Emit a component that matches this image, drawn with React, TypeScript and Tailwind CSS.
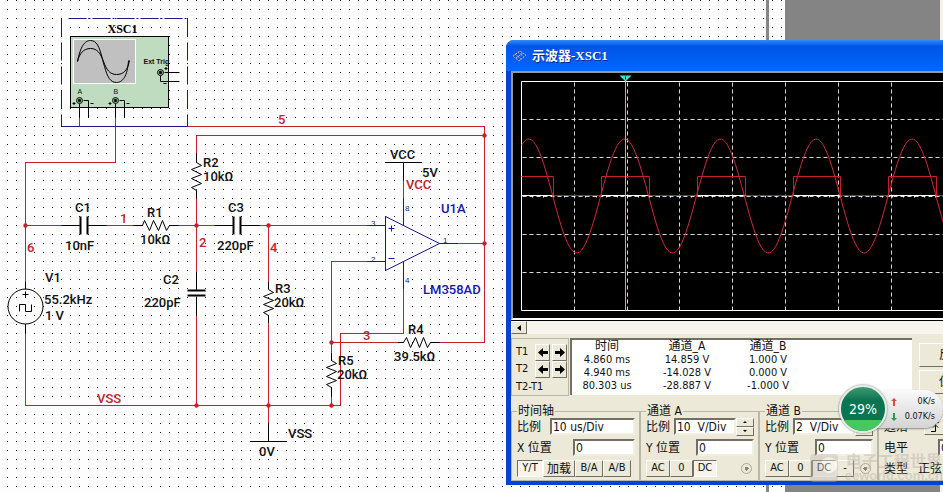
import React from 'react';

const RED = '#c4212d';
const NAVY = '#1a1a8c';

// x, y pairs joined by straight wires
const redWires = [
  '79,117 79,126 484,126 484,342 439,342',
  '115,117 115,162 25,162 25,281',
  '196,153 196,135 484,135',
  '25,225 61,225',
  '106,225 133,225',
  '178,225 214,225',
  '259,225 367,225',
  '196,198 196,271',
  '196,315 196,405',
  '268,225 268,281',
  '268,323 268,423',
  '25,333 25,405 340,405 340,333 403,333 403,288',
  '367,261 331,261 331,352',
  '331,342 397,342',
  '331,396 331,405',
  '458,243 484,243',
  '403,180 403,198',
];

const blackLines = [
  '61,225 80,225',
  '88,225 106,225',
  '133,225 142,225 144,220 149,230 153,220 158,230 162,220 166,230 169,225 178,225',
  '214,225 233,225',
  '241,225 259,225',
  '196,153 196,162 201,165 191,169 201,174 191,178 201,183 191,187 196,190 196,198',
  '196,271 196,290',
  '196,296 196,315',
  '268,281 268,289 273,292 263,296 273,300 263,304 273,308 263,312 268,315 268,323',
  '331,352 331,360 336,363 326,367 336,371 326,376 336,380 326,384 331,387 331,396',
  '397,342 403,342 406,337 410,347 415,337 419,347 423,337 427,347 430,342 439,342',
  '268,423 268,441',
  '250,441 286,441',
  '385,162 421,162',
  '403,162 403,180',
  '25,281 25,289',
  '25,324 25,333',
  '22,294 28,294',
  '25,291 25,297',
  '19,311 19,304 25,304 25,311 31,311 31,304',
];

const blueLines = [
  '367,225 385,225',
  '367,261 385,261',
  '385,216 385,270 439,243 385,216',
  '439,243 458,243',
  '403,198 403,225',
  '403,261 403,288',
  '388,228 394,228',
  '391,225 391,231',
  '388,258 394,258',
];

const nodes = [
  [25, 225],
  [196, 225],
  [268, 225],
  [484, 135],
  [484, 243],
  [331, 342],
  [331, 405],
  [268, 405],
  [196, 405],
];

interface Label {
  x: number;
  y: number;
  text: string;
  fill?: string;
}

const labels: Label[] = [
  { x: 75, y: 212, text: 'C1' },
  { x: 65, y: 250, text: '10nF' },
  { x: 147, y: 217, text: 'R1' },
  { x: 140, y: 244, text: '10kΩ' },
  { x: 203, y: 167, text: 'R2' },
  { x: 203, y: 181, text: '10kΩ' },
  { x: 228, y: 212, text: 'C3' },
  { x: 217, y: 250, text: '220pF' },
  { x: 163, y: 284, text: 'C2' },
  { x: 144, y: 307, text: '220pF' },
  { x: 45, y: 282, text: 'V1' },
  { x: 44, y: 304, text: '55.2kHz' },
  { x: 45, y: 320, text: '1 V' },
  { x: 275, y: 293, text: 'R3' },
  { x: 274, y: 307, text: '20kΩ' },
  { x: 338, y: 365, text: 'R5' },
  { x: 337, y: 379, text: '20kΩ' },
  { x: 408, y: 334, text: 'R4' },
  { x: 394, y: 361, text: '39.5kΩ' },
  { x: 390, y: 159, text: 'VCC' },
  { x: 422, y: 177, text: '5V' },
  { x: 288, y: 438, text: 'VSS' },
  { x: 259, y: 456, text: '0V' },
  { x: 406, y: 189, text: 'VCC', fill: RED },
  { x: 97, y: 403, text: 'VSS', fill: RED },
  { x: 278, y: 124, text: '5', fill: RED },
  { x: 120, y: 223, text: '1', fill: RED },
  { x: 27, y: 252, text: '6', fill: RED },
  { x: 199, y: 247, text: '2', fill: RED },
  { x: 270, y: 252, text: '4', fill: RED },
  { x: 363, y: 340, text: '3', fill: RED },
  { x: 441, y: 213, text: 'U1A', fill: '#1515b4' },
  { x: 423, y: 294, text: 'LM358AD', fill: '#1515b4' },
];

const pins: Label[] = [
  { x: 371, y: 226, text: '3' },
  { x: 371, y: 262, text: '2' },
  { x: 405, y: 211, text: '8' },
  { x: 443, y: 243, text: '1' },
  { x: 405, y: 283, text: '4' },
];

const Terminal = ({ x, y }: { x: number; y: number }) => (
  <g>
    <circle cx={x} cy={y} r="3" fill="#9ab89a" stroke="#111" />
    <circle cx={x} cy={y} r="1.2" fill="#111" />
  </g>
);

const Instrument = () => (
  <g fill="none" stroke="#000">
    <g stroke={NAVY}>
      <path d="M68 18H187" strokeDasharray="18 2 2 2" />
      <path d="M61 18V126M187 18V126" strokeDasharray="18 6" />
      <path d="M61 126H187" />
    </g>
    <rect x="70" y="36" width="98" height="71" fill="#c0dcc0" />
    <rect x="73" y="39" width="62" height="44" fill="#c0c0c0" stroke="#fff" />
    <path d="M77 61C80 46 84 40 90 40S99 46 102 59L104 66C107 77 110 82 116 82S127 76 128 60" />
    <path d="M77 61C79 53 83 48 90 48S100 53 103 61S109 74 116 74S127 70 129 60" />
    <path d="M79 103V117M83 100H88V117M115 103V117M119 100H124V117M164 72H179M160 75V81H179" />
    <path d="M72 103H75M73.500 101.500V104.500M90 103H93M108 103H111M109.500 101.500V104.500M126 103H129M164 68H167M165.500 66.500V69.500M163 83H166" />
    <Terminal x={79} y={100} />
    <Terminal x={115} y={100} />
    <Terminal x={160} y={72} />
    <g fill="#111" stroke="none" className="font-['Liberation_Sans',sans-serif] text-[7px]">
      <text x="77" y="93">A</text>
      <text x="113" y="93">B</text>
      <text x="143" y="63" className="font-bold">Ext Trig</text>
    </g>
    <text x="107" y="32" fill="#000" stroke="none" className="font-['Liberation_Serif',serif] text-[12px] font-bold">
      XSC1
    </text>
  </g>
);

const Schematic = () => (
  <svg className="h-full min-h-[492px] w-[785px] shrink-0 bg-[#fdfdfd]" role="img" aria-label="Circuit schematic">
    <defs>
      <pattern id="dots" width="9" height="9" patternUnits="userSpaceOnUse">
        <rect x="7" y="0" width="1" height="1" fill="#222" />
      </pattern>
    </defs>
    <rect width="100%" height="100%" fill="url(#dots)" />
    <rect x="766" width="3" height="100%" fill="#868686" />
    <g transform="translate(.5 .5)" fill="none">
      {redWires.map((p) => (
        <polyline key={p} points={p} stroke={RED} />
      ))}
      {blackLines.map((p) => (
        <polyline key={p} points={p} stroke="#000" />
      ))}
      {blueLines.map((p) => (
        <polyline key={p} points={p} stroke={NAVY} />
      ))}
      <circle cx="25" cy="306" r="17.500" stroke="#000" />
      <path d="M80 216V234M87 216V234M233 216V234M240 216V234M187 290H205M187 295H205" stroke="#000" strokeWidth="2" />
      {nodes.map(([x, y]) => (
        <circle key={`${x}-${y}`} cx={x} cy={y} r="2.200" fill={RED} />
      ))}
      <Instrument />
    </g>
    <g className="font-[Roboto,'Liberation_Sans',sans-serif] text-[13px] font-medium">
      {labels.map((l) => (
        <text key={`${l.x}-${l.y}`} x={l.x} y={l.y} fill={l.fill || '#111'}>
          {l.text}
        </text>
      ))}
    </g>
    <g className="font-['Liberation_Sans',sans-serif] text-[8px]" fill={NAVY}>
      {pins.map((l) => (
        <text key={l.text} x={l.x} y={l.y}>
          {l.text}
        </text>
      ))}
    </g>
  </svg>
);

const gridColumns = [61, 114, 166, 219, 272, 325, 378, 431, 484, 537];
const gridRows = [46, 84, 161, 199];
const ticks = Array.from({ length: 50 }, (_, i) => 19 + i * 10.6);

const sine = Array.from({ length: 270 }, (_, i) => {
  const x = 8 + i * 2;
  const y = 122.5 - 57 * Math.cos(((x - 15.3) / 95.8) * Math.PI * 2);
  return `${x},${y.toFixed(1)}`;
}).join(' ');

const square =
  'M8 103H40V122H88V103H136V122H184V103H232V122H280V103H327V122H375V103H423V122H471V103H519V122H550';

const ScopeScreen = () => (
  <svg className="block h-[245px] w-full bg-black" role="img" aria-label="Waveform">
    <g transform="translate(.5 .5)" fill="none">
      <path d="M600 8H8V237H600" stroke="#fff" />
      <g stroke="#d8d8d8" strokeDasharray="4 3">
        {gridColumns.map((x) => (
          <path key={x} d={`M${x} 9V237`} />
        ))}
        {gridRows.map((y) => (
          <path key={y} d={`M9 ${y}H600`} />
        ))}
        <path d="M9 123H600" />
      </g>
      <path d="M8 122H600" stroke="#fff" />
      {ticks.map((x) => (
        <path key={x} d={`M${Math.round(x)} 122V124`} stroke="#fff" />
      ))}
      <polyline points={sine} stroke="#d02c36" />
      <path d={square} stroke="#c8202a" />
      <path d="M112 8V237" stroke="#5cd6d6" />
      <path d="M106 2H118L112 8Z" fill="#40e0d0" />
      <path d="M112 3V6" stroke="#000" />
    </g>
  </svg>
);

const raised =
  'flex items-center justify-center border border-t-white border-l-white border-r-[#716f64] border-b-[#716f64] bg-[#ece9d8]';
const pressed =
  'flex items-center justify-center border border-t-[#716f64] border-l-[#716f64] border-r-white border-b-white bg-[#f6f4ec]';
const sunken =
  'h-[17px] min-w-0 rounded-none border-2 border-t-[#716f64] border-l-[#716f64] border-r-[#f1efe2] border-b-[#f1efe2] bg-white pl-px text-[12px] leading-3 outline-none';

const Arrow = ({ right }: { right?: boolean }) => (
  <svg width="10" height="9" viewBox="0 0 10 9" className={right ? 'rotate-180' : ''} aria-hidden="true">
    <path d="M0 4.500L5 0V3H10V6H5V9Z" fill="#000" />
  </svg>
);

const CursorButtons = ({ name }: { name: string }) => (
  <div className="flex h-[17px] items-center">
    <span className="w-[19px]">{name}</span>
    <div className="flex gap-[2px]">
      <button type="button" aria-label={`${name} left`} className={`h-[17px] w-[15px] ${raised}`}>
        <Arrow />
      </button>
      <button type="button" aria-label={`${name} right`} className={`h-[17px] w-[15px] ${raised}`}>
        <Arrow right />
      </button>
    </div>
  </div>
);

const readings = [
  ['4.860 ms', '14.859 V', '1.000 V'],
  ['4.940 ms', '-14.028 V', '0.000 V'],
  ['80.303 us', '-28.887 V', '-1.000 V'],
];

const Readings = () => (
  <div className="h-[57px] w-[342px] shrink-0 border-t-2 border-l-2 border-[#716f64] bg-white">
    <table className="w-[232px] table-fixed border-collapse text-center leading-[13px]">
      <thead>
        <tr className="text-[12px]">
          <th className="w-[70px] p-0 font-normal">时间</th>
          <th className="w-[90px] p-0 font-normal">通道_A</th>
          <th className="w-[72px] p-0 font-normal">通道_B</th>
        </tr>
      </thead>
      <tbody>
        {readings.map((row) => (
          <tr key={row[0]}>
            {row.map((cell) => (
              <td key={cell} className="p-0">
                {cell}
              </td>
            ))}
          </tr>
        ))}
      </tbody>
    </table>
  </div>
);

interface PanelProps {
  title: string;
  className: string;
  children: React.ReactNode;
}

const Panel: React.FC<PanelProps> = ({ title, className, children }) => (
  <fieldset className={`min-w-0 border border-[#bab7a6] pr-1 pb-[3px] pl-[5px] ${className}`}>
    <legend className="px-px text-[12px] leading-[14px]">{title}</legend>
    <div className="flex flex-col gap-1">{children}</div>
  </fieldset>
);

const Spinner = () => (
  <div className="flex w-[18px] shrink-0 flex-col">
    <button type="button" aria-label="Increase" className={`h-[9px] ${raised}`}>
      <svg width="4" height="2" aria-hidden="true">
        <path d="M0 2L2 0L4 2Z" />
      </svg>
    </button>
    <button type="button" aria-label="Decrease" className={`h-[9px] ${raised}`}>
      <svg width="4" height="2" aria-hidden="true">
        <path d="M0 0L2 2L4 0Z" />
      </svg>
    </button>
  </div>
);

interface ChannelProps {
  name: string;
  scale: string;
  invert?: boolean;
}

const ChannelPanel: React.FC<ChannelProps> = ({ name, scale, invert }) => (
  <Panel title={`通道 ${name}`} className="w-[119px] shrink-0">
    <div className="flex h-[17px] items-center">
      <label htmlFor={`scale-${name}`} className="w-[28px] shrink-0 text-[12px]">
        比例
      </label>
      <input id={`scale-${name}`} defaultValue={scale} className={`flex-1 ${sunken}`} />
      <Spinner />
    </div>
    <div className="flex h-[17px] items-center">
      <label htmlFor={`pos-${name}`} className="flex-1 text-[12px]">
        Y 位置
      </label>
      <input id={`pos-${name}`} defaultValue="0" className={`w-[58px] ${sunken}`} />
    </div>
    <div className="flex h-[17px] items-center">
      <button type="button" className={`h-[17px] w-[24px] ${raised}`}>AC</button>
      <button type="button" className={`h-[17px] w-[23px] ${raised}`}>0</button>
      <button type="button" className={`h-[17px] w-[24px] ${pressed}`}>DC</button>
      {invert && (
        <button type="button" className={`h-[17px] w-[18px] ${raised}`}>-</button>
      )}
      <input
        type="radio"
        name={`probe-${name}`}
        aria-label={`Channel ${name} input`}
        defaultChecked
        className="mr-[2px] ml-auto size-[11px] appearance-none rounded-full border border-[#aca899] bg-[radial-gradient(circle,#8a877a_2px,#ece9d8_2px)]"
      />
    </div>
  </Panel>
);

const TimebasePanel = () => (
  <Panel title="时间轴" className="w-[129px] shrink-0">
    <div className="flex h-[17px] items-center">
      <label htmlFor="timebase" className="w-[33px] shrink-0 text-[12px]">
        比例
      </label>
      <input id="timebase" defaultValue="10 us/Div" className={`flex-1 ${sunken}`} />
    </div>
    <div className="flex h-[17px] items-center">
      <label htmlFor="pos-x" className="flex-1 text-[12px]">
        X 位置
      </label>
      <input id="pos-x" defaultValue="0" className={`w-[62px] ${sunken}`} />
    </div>
    <div className="flex h-[17px]">
      <button type="button" className={`w-[26px] ${pressed}`}>Y/T</button>
      <button type="button" className={`w-[32px] text-[12px] ${raised}`}>加载</button>
      <button type="button" className={`w-[28px] ${raised}`}>B/A</button>
      <button type="button" className={`w-[28px] ${raised}`}>A/B</button>
    </div>
  </Panel>
);

const TriggerPanel = () => (
  <Panel title="触发" className="flex-1">
    <div className="flex h-[17px] items-center text-[12px]">
      <span className="w-[40px]">边沿</span>
      <button type="button" aria-label="Rising edge" className={`h-[17px] w-[22px] ${raised}`}>
        <svg width="10" height="10" fill="none" stroke="#000" aria-hidden="true">
          <path d="M1 9.500H5.500V.5H9M3 5.500L5.500 3L8 5.500" />
        </svg>
      </button>
    </div>
    <div className="flex h-[17px] items-center">
      <label htmlFor="level" className="w-[54px] text-[12px]">
        电平
      </label>
      <input id="level" defaultValue="0" className={`w-[62px] ${sunken}`} />
    </div>
    <div className="flex h-[17px] items-center text-[12px]">
      <span className="w-[34px]">类型</span>
      <button type="button">正弦</button>
    </div>
  </Panel>
);

const ScopeWindow = () => (
  <section className="absolute top-10 -right-40 left-[506px] overflow-hidden rounded-t-lg bg-[#0842d4] font-['DejaVu_Sans_Condensed','DejaVu_Sans','Noto_Sans_CJK_SC',sans-serif] text-[11px] text-[#111]">
    <header className="flex h-[31px] items-center gap-[5px] bg-linear-to-b from-[#2f8bff] via-[#0055e5] via-20% to-[#0266ff] pl-[6px]">
      <svg width="15" height="12" fill="none" stroke="#d9b8c0" aria-hidden="true">
        <path d="M1 6L8 1L14 5L7 11ZM3 4L9 9M6 2L12 7M4 8L11 3" strokeDasharray="2 1" />
        <path d="M2 7L9 2M6 10L13 5" stroke="#332f55" strokeDasharray="1 1" />
      </svg>
      <h1 className="font-['Liberation_Serif','Noto_Sans_CJK_SC',serif] text-[13px] font-bold text-white [text-shadow:1px_1px_#0a2a80]">
        示波器-XSC1
      </h1>
    </header>
    <div className="border-b-4 border-l-[5px] border-[#0842d4] bg-[#ece9d8]">
      <div className="border-t-2 border-b-2 border-l-2 border-t-[#9a9a9a] border-b-white border-l-[#9a9a9a]">
        <ScopeScreen />
      </div>
      <div className="flex h-[14px] border-t border-black bg-[#f6f4ec]">
        <button type="button" aria-label="Scroll left" className={`w-4 ${raised}`}>
          <svg width="4" height="6" aria-hidden="true">
            <path d="M4 0V6L0 3Z" />
          </svg>
        </button>
      </div>
      <div className="mt-1 flex gap-px">
        <div className="h-[58px] w-[58px] shrink-0 border border-[#bab7a6] pt-[5px] pl-1">
          <CursorButtons name="T1" />
          <CursorButtons name="T2" />
          <div className="leading-[18px]">T2-T1</div>
        </div>
        <Readings />
        <div className="flex flex-1 flex-col gap-[3px] pt-[5px] pl-[6px] text-[12px]">
          <button type="button" className={`h-6 w-[64px] ${raised}`}>反向</button>
          <button type="button" className={`h-6 w-[64px] ${raised}`}>保存</button>
        </div>
      </div>
      <div className="mt-2 flex">
        <TimebasePanel />
        <ChannelPanel name="A" scale="10  V/Div" />
        <ChannelPanel name="B" scale="2  V/Div" invert />
        <TriggerPanel />
      </div>
    </div>
  </section>
);

const SpeedWidget = () => (
  <aside className="absolute top-[385px] right-0 flex items-center font-['DejaVu_Sans_Condensed','DejaVu_Sans',sans-serif]">
    <div className="z-10 flex size-12 items-center justify-center rounded-full border-2 border-[#e4ece6] bg-linear-to-b from-[#3c9a76] via-[#0a7550] via-30% to-[#0a7550] shadow-[0_0_2px_#555]">
      <div className="flex size-full items-center justify-center rounded-full bg-linear-to-b from-transparent from-75% to-[#46c860] to-75% text-[14px] text-white">
        29%
      </div>
    </div>
    <div className="-ml-6 flex h-[38px] w-20 flex-col justify-center rounded-r-full bg-linear-to-b from-[#fafafa] to-[#d4d4d4] pr-2 pl-[28px] text-[9px] leading-[15px] text-[#111] shadow-[0_1px_2px_#888]">
      <div className="flex items-center justify-between">
        <svg width="6" height="8" aria-hidden="true">
          <path d="M3 0L6 3H4V8H2V3H0Z" fill="#d8503c" />
        </svg>
        <span>0K/s</span>
      </div>
      <div className="flex items-center justify-between">
        <svg width="6" height="8" aria-hidden="true">
          <path d="M3 8L0 5H2V0H4V5H6Z" fill="#2f9a4c" />
        </svg>
        <span className="whitespace-nowrap">0.07K/s</span>
      </div>
    </div>
  </aside>
);

const Watermark = () => (
  <div className="pointer-events-none absolute top-[452px] right-0 flex items-start gap-1 opacity-40">
    <svg width="32" height="32" aria-hidden="true">
      <rect x="1" y="2" width="28" height="28" rx="4" fill="#bdb9b0" />
      <circle cx="20" cy="13" r="8" fill="#f4f2ec" />
    </svg>
    <div className="text-center leading-4 text-[#b9aaa4]">
      <div className="font-['Noto_Sans_CJK_SC',sans-serif] text-[16px] font-bold">电子工程世界</div>
      <div className="font-['Liberation_Sans',sans-serif] text-[13px] font-bold">eeworld.com.cn</div>
    </div>
  </div>
);

const App: React.FC = () => {
  return (
    <main className="relative flex h-screen min-h-[492px] w-full overflow-hidden bg-[#f4f1ec]">
      <Schematic />
      <div className="mr-[3px] flex-1 bg-[#848484]" />
      <ScopeWindow />
      <SpeedWidget />
      <Watermark />
    </main>
  );
};

export default App;
